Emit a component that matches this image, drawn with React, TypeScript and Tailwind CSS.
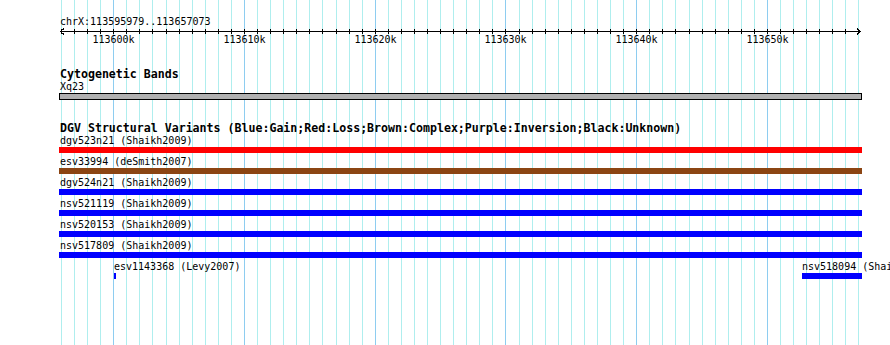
import React from "react";

const START = 113595979;
const xOf = (bp: number) => 60.7 + (bp - START) * 0.013074;

const gridKb: number[] = [];
for (let kb = 113596; kb <= 113657; kb++) gridKb.push(kb);

const rows: { label: string; color: string }[] = [
  { label: "dgv523n21 (Shaikh2009)", color: "bg-[#ff0000]" },
  { label: "esv33994 (deSmith2007)", color: "bg-[#8b4513]" },
  { label: "dgv524n21 (Shaikh2009)", color: "bg-[#0000ff]" },
  { label: "nsv521119 (Shaikh2009)", color: "bg-[#0000ff]" },
  { label: "nsv520153 (Shaikh2009)", color: "bg-[#0000ff]" },
  { label: "nsv517809 (Shaikh2009)", color: "bg-[#0000ff]" },
];

function Grid() {
  return (
    <svg className="absolute inset-0" width={890} height={345} shapeRendering="crispEdges">
      {gridKb.map((kb) => {
        const x = Math.round(xOf(kb * 1000)) + 0.5;
        const major = kb % 10 === 0;
        return (
          <line key={kb} x1={x} x2={x} y1={0} y2={345} stroke={major ? "#8ecdf0" : "#afeeee"} strokeWidth={1} />
        );
      })}
    </svg>
  );
}

function Axis() {
  return (
    <svg width={890} height={22} className="block" shapeRendering="crispEdges">
      <line x1={60} x2={861} y1={3.5} y2={3.5} stroke="#000" />
      <polyline points="64,0.5 60.5,3.5 64,6.5" fill="none" stroke="#000" />
      <polyline points="857,0.5 860.5,3.5 857,6.5" fill="none" stroke="#000" />
      {gridKb.map((kb) => {
        const x = Math.round(xOf(kb * 1000)) + 0.5;
        return <line key={kb} x1={x} x2={x} y1={1} y2={6} stroke="#000" />;
      })}
      {gridKb
        .filter((kb) => kb % 10 === 0)
        .map((kb) => {
          const x = Math.round(xOf(kb * 1000)) + 0.5;
          return (
            <text
              key={kb}
              x={x}
              y={15}
              textAnchor="middle"
              fontFamily="'DejaVu Sans Mono', monospace"
              fontSize={10}
              fill="#000"
              shapeRendering="auto"
            >
              {kb}k
            </text>
          );
        })}
    </svg>
  );
}

export default function App() {
  return (
    <div className="relative w-[890px] h-[345px] overflow-hidden bg-white text-black font-['DejaVu_Sans_Mono',monospace]">
      <Grid />
      <div className="relative flex flex-col">
        <div className="pt-[15px] pl-[60px] text-[10px] leading-[13px] whitespace-nowrap">
          chrX:113595979..113657073
        </div>
        <Axis />

        <div className="mt-[18px] pl-[60px] text-[11.6px] leading-[12px] font-bold whitespace-nowrap">
          Cytogenetic Bands
        </div>
        <div className="pl-[60px] text-[10px] leading-[13px] whitespace-nowrap">Xq23</div>
        <div className="ml-[59px] w-[803px] h-[7px] border border-black bg-[#b0b0b0]" />

        <div className="mt-[22px] pl-[60px] text-[11.6px] leading-[12px] font-bold whitespace-nowrap">
          DGV Structural Variants (Blue:Gain;Red:Loss;Brown:Complex;Purple:Inversion;Black:Unknown)
        </div>

        {rows.map((r) => (
          <div key={r.label} className="flex flex-col pb-[2px]">
            <div className="pl-[60px] text-[10px] leading-[13px] whitespace-nowrap">{r.label}</div>
            <div className={`ml-[59px] w-[803px] h-[6px] ${r.color}`} />
          </div>
        ))}

        <div className="relative h-[21px]">
          <div className="absolute left-[114px] top-0 flex flex-col">
            <div className="text-[10px] leading-[13px] whitespace-nowrap">esv1143368 (Levy2007)</div>
            <div className="w-[2px] h-[6px] bg-[#0000ff]" />
          </div>
          <div className="absolute left-[802px] top-0 flex flex-col">
            <div className="text-[10px] leading-[13px] whitespace-nowrap">nsv518094 (Shaikh2009)</div>
            <div className="w-[60px] h-[6px] bg-[#0000ff]" />
          </div>
        </div>
      </div>
    </div>
  );
}
